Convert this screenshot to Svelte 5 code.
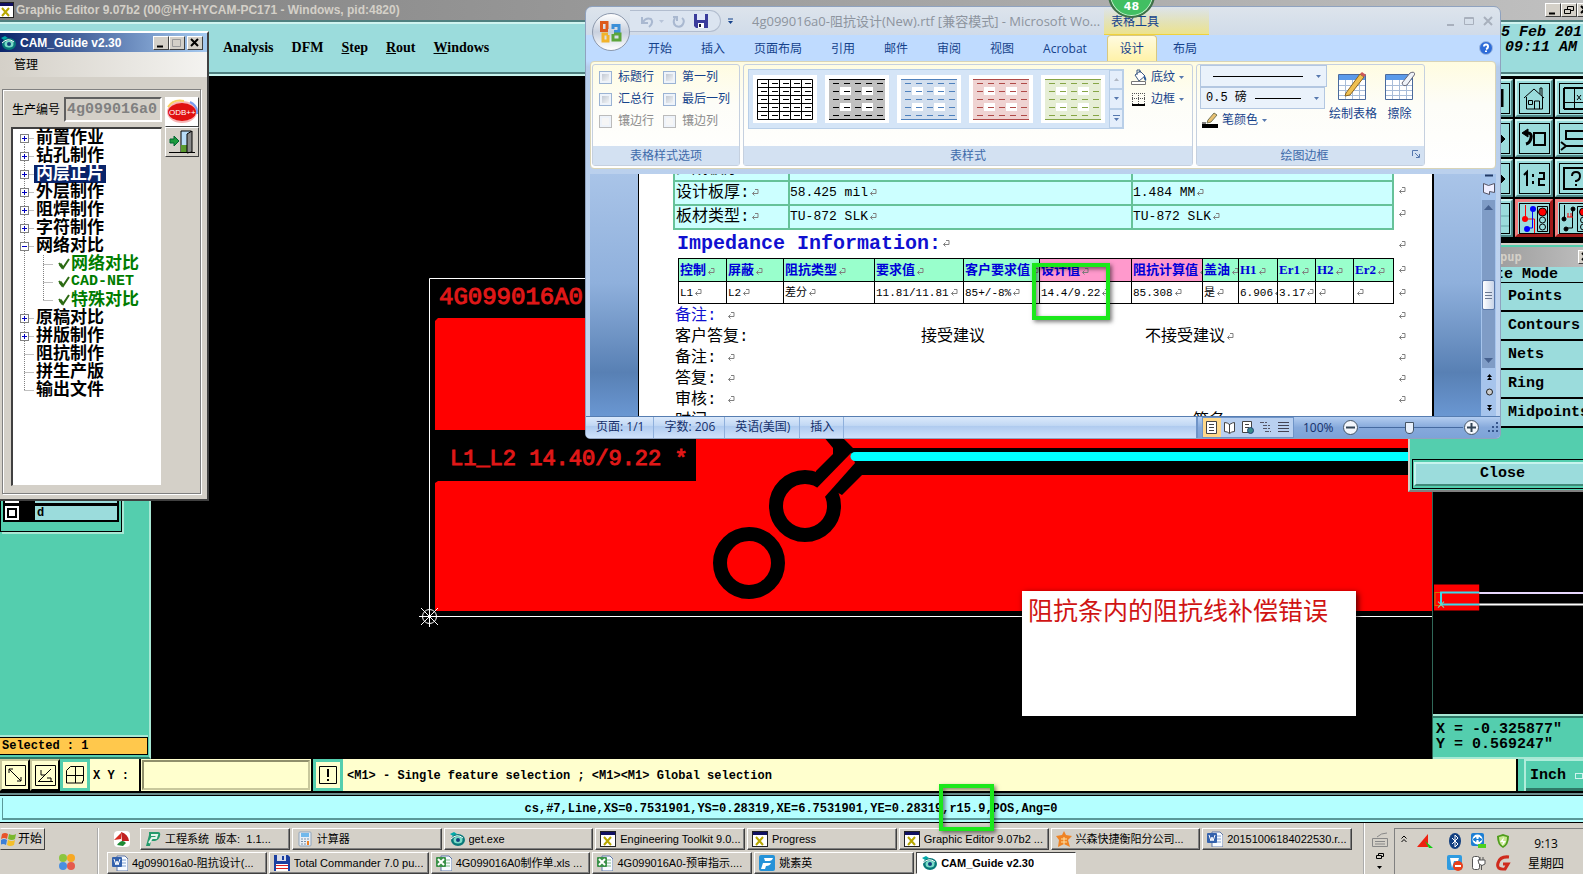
<script lang="ts">
	interface TreeNode {
		label: string;
		kind: 'closed' | 'open' | 'child' | 'leaf';
		last?: boolean;
		latin?: boolean;
	}

	const nodes: TreeNode[] = [
		{ label: '前置作业', kind: 'closed' },
		{ label: '钻孔制作', kind: 'closed' },
		{ label: '内层正片', kind: 'closed' },
		{ label: '外层制作', kind: 'closed' },
		{ label: '阻焊制作', kind: 'closed' },
		{ label: '字符制作', kind: 'closed' },
		{ label: '网络对比', kind: 'open' },
		{ label: '网络对比', kind: 'child' },
		{ label: 'CAD-NET', kind: 'child', latin: true },
		{ label: '特殊对比', kind: 'child', last: true },
		{ label: '原稿对比', kind: 'closed' },
		{ label: '拼版制作', kind: 'closed' },
		{ label: '阻抗制作', kind: 'leaf' },
		{ label: '拼生产版', kind: 'leaf' },
		{ label: '输出文件', kind: 'leaf', last: true }
	];
	let selected = $state(2);

	const tabs = ['开始', '插入', '页面布局', '引用', '邮件', '审阅', '视图', 'Acrobat'];

	const options = [
		{ label: '标题行', disabled: false },
		{ label: '第一列', disabled: false },
		{ label: '汇总行', disabled: false },
		{ label: '最后一列', disabled: false },
		{ label: '镶边行', disabled: true },
		{ label: '镶边列', disabled: true }
	];

	const tableStyles = [
		{ fill: '#ffffff', ink: '#000000', grid: true },
		{ fill: '#c0c0c0', ink: '#000000', grid: false },
		{ fill: '#d3dfee', ink: '#4f81bd', grid: false },
		{ fill: '#efd3d2', ink: '#b04a48', grid: false },
		{ fill: '#e6eed5', ink: '#86a546', grid: false }
	];

	const columns = [
		{ head: '控制', value: 'L1', width: 48 },
		{ head: '屏蔽', value: 'L2', width: 57 },
		{ head: '阻抗类型', value: '差分', width: 91 },
		{ head: '要求值', value: '11.81/11.81', width: 89 },
		{ head: '客户要求值', value: '85+/-8%', width: 76 },
		{ head: '设计值', value: '14.4/9.22', width: 92, pink: true },
		{ head: '阻抗计算值', value: '85.308', width: 71, pink: true },
		{ head: '盖油', value: '是', width: 36 },
		{ head: 'H1', value: '6.906', width: 39 },
		{ head: 'Er1', value: '3.17', width: 38 },
		{ head: 'H2', value: '', width: 38 },
		{ head: 'Er2', value: '', width: 40 }
	];

	const tools = [
		'bar', 'bar', 'home', 'window',
		'arrow', 'arrow', 'undo', 'snake',
		'arrow', 'arrow', 'ratio', 'help',
		'grid', 'grid', 'nets', 'pads'
	];

	const modes = ['Points', 'Contours', 'Nets', 'Ring', 'Midpoints'];

	const topTasks = [
		{ icon: 'p', label: '工程系统  版本:  1.1...' },
		{ icon: 'calc', label: '计算器' },
		{ icon: 'eye', label: 'get.exe' },
		{ icon: 'x', label: 'Engineering Toolkit 9.0...' },
		{ icon: 'x', label: 'Progress' },
		{ icon: 'x', label: 'Graphic Editor 9.07b2 ...' },
		{ icon: 'star', label: '兴森快捷衡阳分公司...' },
		{ icon: 'word', label: '20151006184022530.r...' }
	];
	const bottomTasks = [
		{ icon: 'word', label: '4g099016a0-阻抗设计(...' },
		{ icon: 'disk', label: 'Total Commander 7.0 pu...' },
		{ icon: 'excel', label: '4G099016A0制作单.xls ...' },
		{ icon: 'excel', label: '4G099016A0-预审指示....' },
		{ icon: 'f', label: '姚素英' },
		{ icon: 'eye', label: 'CAM_Guide v2.30', active: true }
	];

	let zoom = $state(49);
</script>

{#snippet mark()}
	<svg class="mark" width="8" height="9" viewBox="0 0 8 9" fill="none" stroke="#808080">
		<path d="M4 1.5h3v4H1.500M3.500 3.500l-2 2 2 2" />
	</svg>
{/snippet}

{#snippet caret()}
	<svg width="5" height="3" viewBox="0 0 5 3"><path d="M0 0h5L2.500 3z" fill="#5678ae" /></svg>
{/snippet}

{#snippet icon(name: string)}
	<svg class="icon" width="16" height="16" viewBox="0 0 16 16">
		{#if name === 'x'}
			<rect x=".5" y=".5" width="15" height="15" fill="#fff" stroke="#222" />
			<rect x="1" y="1" width="14" height="3" fill="#101060" />
			<path d="M4 6l7 8M11 6l-7 8" stroke="#b8a800" stroke-width="2" />
		{:else if name === 'p'}
			<path d="M4 1h9q3 0 2 4t-5 5H6l-1 5H1L4 4z" fill="#259a6c" />
			<path d="M6 4h6l-1 3H7l-3 5" fill="none" stroke="#e5f5ec" stroke-width="2" />
		{:else if name === 'calc'}
			<rect x="2" y="1" width="12" height="14" rx="1" fill="#e8eef5" stroke="#8fa4bb" />
			<rect x="4" y="2" width="8" height="4" fill="#70b8ec" />
			<path d="M4 8h8M4 10.500h8M4 13h8" stroke="#7890a8" stroke-dasharray="2 1" />
			<path d="M11 10v4" stroke="#f08020" stroke-width="2" />
		{:else if name === 'eye'}
			<path d="M1 3l4-2 3 2-4 2z" fill="#0aa" />
			<ellipse cx="9" cy="9" rx="7" ry="6" fill="#087878" />
			<ellipse cx="9" cy="9" rx="4.500" ry="3.500" fill="#7adcc8" />
			<circle cx="9" cy="9" r="2" fill="#14407c" />
			<path d="M2 8q6-6 12-1" fill="none" stroke="#fff" />
		{:else if name === 'star'}
			<path d="M8 0l2 4 6 1-4 4 2 7-6-3-6 3 1-7-3-4 6-1z" fill="#ef8324" />
			<path d="M5 8h6M5 11h6M8 6v7" stroke="#ffe0a0" />
		{:else if name === 'word' || name === 'excel'}
			<path d="M5 1h8l3 3v12H5z" fill="#f8fbff" stroke="#6078a8" />
			<path d="M9 5h5M9 8h5M9 11h5" stroke={name === 'word' ? '#7f9fd0' : '#7fb88a'} />
			<rect x="0" y="2" width="10" height="10" rx="1" fill={name === 'word' ? '#3462ad' : '#3a9148'} />
			{#if name === 'word'}
				<path d="M2 4l2 6 1-4 1 4 2-6" fill="none" stroke="#fff" />
			{:else}
				<path d="M2 4l6 6M8 4l-6 6" stroke="#fff" stroke-width="2" />
			{/if}
		{:else if name === 'disk'}
			<path d="M0 0h14l2 2v14H0z" fill="#1b3fa0" />
			<rect x="3" y="0" width="9" height="6" fill="#d8dce8" />
			<rect x="8" y="1" width="2" height="4" fill="#1b3fa0" />
			<rect x="2" y="9" width="12" height="7" fill="#fff" />
			<path d="M2 10.500h12M2 13.500h12" stroke="#e02020" />
		{:else if name === 'f'}
			<rect width="16" height="16" rx="2" fill="#2492d8" />
			<path d="M5 3h9q-1 3-4 3H6zM4 8h8q-1 3-5 3l-1 3H2z" fill="#fff" />
		{/if}
	</svg>
{/snippet}

<div class="screen">
	<header class="titlebar">
		{@render icon('x')}
		<span>Graphic Editor 9.07b2 (00@HY-HYCAM-PC171 - Windows, pid:4820)</span>
		<div class="title-buttons">
			<button class="sys" aria-label="Minimize"><svg width="10" height="10"><path d="M1 8.500h6" stroke="#000" stroke-width="2" /></svg></button>
			<button class="sys" aria-label="Restore"><svg width="10" height="10" fill="none" stroke="#000"><path d="M3.500 4V1.500h6v4H7M.5 4.500h6v4h-6z" /></svg></button>
			<button class="sys" aria-label="Close"><svg width="10" height="10"><path d="M1 1l7 7M8 1l-7 7" stroke="#000" stroke-width="2" /></svg></button>
		</div>
	</header>

	<nav class="menubar">
		<div class="menus">
			<button>Analysis</button>
			<button>DFM</button>
			<button><u>S</u>tep</button>
			<button><u>R</u>out</button>
			<button><u>W</u>indows</button>
		</div>
		<div class="date"><span>5 Feb 201</span><span class="time">09:11 AM</span></div>
	</nav>

	<main>
		<aside class="layers">
			<div class="layer-list">
				<div class="layer"><span class="box"></span><span class="name"></span></div>
				<div class="layer"><span class="box"></span><span class="name">d</span></div>
			</div>
			<div class="selected">Selected : 1</div>
		</aside>

		<svg class="canvas" viewBox="151 76 1282 683" preserveAspectRatio="xMinYMin slice">
			<path d="M438 318h900v112H435V321z" fill="#f00" />
			<path d="M696 430h760v181H435V483l3-2h258z" fill="#f00" />
			<path d="M816 471l17-17v-6l-10-12h18l12 12h603v27H862l-20 20-9-5-17-11z" />
			<circle cx="805" cy="506" r="29" fill="#f00" stroke="#000" stroke-width="14" />
			<path d="M812 493l39-40 4 10-32 36z" fill="#f00" />
			<path d="M855.500 456.500H1456" stroke="#0ff" stroke-width="9" />
			<circle cx="855" cy="456.500" r="4.500" fill="#0ff" />
			<circle cx="749" cy="563" r="29" fill="#f00" stroke="#000" stroke-width="14" />
			<path d="M1456 278.500H429.500v338H1456" fill="none" stroke="#fff" />
			<g fill="none" stroke="#fff">
				<circle cx="429.500" cy="616.500" r="7" />
				<path d="M419 616.500h21M429.500 606v21M421 608l17 17M438 608l-17 17" />
			</g>
			<text class="silk name-mark" x="439" y="304">4G099016A0</text>
			<text class="silk" x="450" y="465">L1_L2 14.40/9.22 *</text>
		</svg>

		<aside class="side">
			<div class="tools">
				{#each tools as tool, i (i)}
					<button class="tool" class:hot={tool === 'nets' || tool === 'pads'} aria-label={tool}>
						<svg width="29" height="29" viewBox="0 0 29 29" fill="none" stroke="#000">
							{#if tool === 'bar'}
								<path d="M22 5v18" stroke-width="3" />
							{:else if tool === 'arrow'}
								<path d="M12 15h8" stroke-width="4" /><path d="M20 10l5 5-5 5z" fill="#000" />
							{:else if tool === 'home'}
								<path d="M4 14L14 5l10 9M6.500 13v12h16V13M14.500 25v-8h5v8M8.500 16.500h4v4h-4zM20 10V4h2v8" />
							{:else if tool === 'window'}
								<path d="M4 4h25M4 4v21M4 25h25" stroke-width="2" /><path d="M14.500 4v21M4 18.500h25" /><path d="M17 11l4 5M21 11l-4 5" />
							{:else if tool === 'undo'}
								<path d="M5 9h3q4 0 3 5t-5 6" stroke-width="3" /><path d="M2 9l6-4v8z" fill="#000" /><path d="M14 9h11v12H14z" stroke-width="2" />
							{:else if tool === 'snake'}
								<path d="M29 7H6v8h22v7H6M1 18l5 4-5 4" stroke-width="2" />
							{:else if tool === 'ratio'}
								<path d="M4 11l3-3v14M19 9h5v6h-5v6h6" stroke-width="2" /><path d="M12 10h2v3h-2zM12 17h2v3h-2z" fill="#000" stroke="none" />
							{:else if tool === 'help'}
								<path d="M4 4h30v21H4z" stroke-width="2" /><path d="M12 12q0-4 4-4t4 4-4 5v1M16 20v2" stroke-width="2" />
							{:else if tool === 'grid'}
								<path d="M0 12h29M0 22h29" stroke="#6aa" />
							{:else if tool === 'nets'}
								<path d="M5.500 1v14h9v14" stroke="#f00" /><path d="M12.500 5v19h-6" stroke="#00f" />
								<circle cx="5" cy="15" r="3" fill="#f00" stroke="none" /><circle cx="13" cy="5" r="3" fill="#00f" stroke="none" /><circle cx="7" cy="25" r="3" fill="#00f" stroke="none" />
								<path d="M17.500 2.500h10v25h-10z" /><circle cx="22.500" cy="8" r="4" fill="#f00" /><circle cx="22.500" cy="16" r="3" /><circle cx="22.500" cy="23" r="3" />
							{:else}
								<path d="M4.500 1v14M12.500 5v19h-6" /><path d="M7 13h6M8 9v4M11 9v4" stroke="#f00" />
								<circle cx="4" cy="15" r="2" fill="#000" /><circle cx="13" cy="5" r="2" fill="#000" /><circle cx="6" cy="25" r="2" fill="#000" />
								<path d="M17.500 2.500h12v25h-12z" /><circle cx="23.500" cy="8" r="4" fill="#f00" /><circle cx="23.500" cy="16" r="3" /><circle cx="23.500" cy="23" r="3" />
							{/if}
						</svg>
					</button>
				{/each}
			</div>
			<svg class="mini" viewBox="1433 242 150 472" preserveAspectRatio="xMinYMax slice">
				<path d="M1434 585h45v26h-45z" fill="#f00" />
				<path d="M1583 593.500h-104" stroke="#e8d8ff" stroke-width="2" />
				<path d="M1479 605h104" stroke="#fff" stroke-width="2" />
				<path d="M1479 593h-38v12h38" fill="none" stroke="#3cdcec" stroke-width="2" />
				<path d="M1440 593h-5v13h5" fill="none" stroke="#d07000" />
				<path d="M1438 602l6 6M1444 602l-6 6" stroke="#7cd8b0" />
			</svg>
			<div class="coords">X = -0.325877"<br />Y = 0.569247"</div>
		</aside>
	</main>

	<div class="command">
		<button class="cmd" aria-label="Zoom area">
			<svg width="21" height="21" fill="none" stroke="#000"><path d="M.5.500h20v20H.5zM4 4l12 12M4 8V4h4M16 12v4h-4" /></svg>
		</button>
		<button class="cmd" aria-label="Angle">
			<svg width="21" height="21" fill="none" stroke="#000"><path d="M.5.500h20v20H.5zM3 16.500h15M4 16L16 4M6 5v5h4M12 13h4v3" /></svg>
		</button>
		<button class="cmd green" aria-label="Grid">
			<svg width="18" height="18" fill="none" stroke="#000"><path d="M.5 4.500l4-4h13v14.500h-1v2H.5zM9.500 1v16M1 9.500h16" /></svg>
		</button>
		<label for="xy">X Y :</label>
		<div class="xy"><input id="xy" type="text" /></div>
		<button class="cmd green" aria-label="Alert">
			<svg width="18" height="18" fill="none" stroke="#000"><path d="M.5.500h17v17H.5z" /><path d="M9 3v8M9 13v2" stroke-width="2" /></svg>
		</button>
		<div class="message">&lt;M1&gt; - Single feature selection ; &lt;M1&gt;&lt;M1&gt; Global selection</div>
		<button class="units">Inch <i></i></button>
	</div>

	<div class="info"><p>cs,#7,Line,XS=0.7531901,YS=0.28319,XE=6.7531901,YE=0.28319,r15.9,POS,Ang=0</p></div>

	<footer class="taskbar">
		<div class="launch">
			<button class="start">
				<svg width="16" height="16" viewBox="0 0 16 16"><path d="M1 3q3-2 6 0L6 8q-3-2-6 0z" fill="#e8532a" /><path d="M8 3q4 2 7 0l-1 5q-3 2-7 0z" fill="#7ab82e" /><path d="M0 9q3-2 6 0l-1 5q-3-2-6 0z" fill="#3c7fd8" /><path d="M7 9q4 2 7 0l-1 5q-4 2-7 0z" fill="#f5bf2a" /></svg>
				开始
			</button>
			<svg class="quad" width="16" height="16" viewBox="0 0 16 16"><circle cx="4" cy="4" r="4" fill="#8bc53f" /><circle cx="12" cy="4" r="4" fill="#f7a823" /><circle cx="4" cy="12" r="4" fill="#4a8fe0" /><circle cx="12" cy="12" r="4" fill="#e55a4e" /></svg>
		</div>
		<div class="tasks">
			<div class="task-row">
				<svg class="quick" width="16" height="16" viewBox="0 0 16 16"><rect width="16" height="16" rx="4" fill="#fff" /><path d="M7 2L0 9l7-1z" fill="#d8281e" /><path d="M7 1q7 2 8 9H8z" fill="#c02020" /><path d="M3 14q5-7 9-2l-3 3z" fill="#1d8a34" /></svg>
				{#each topTasks as task (task.label)}
					<button class="task">{@render icon(task.icon)}<span>{task.label}</span></button>
				{/each}
			</div>
			<div class="task-row lower">
				{#each bottomTasks as task (task.label)}
					<button class="task" class:active={task.active}>{@render icon(task.icon)}<span>{task.label}</span></button>
				{/each}
			</div>
		</div>
		<div class="ime">
			<svg width="16" height="15" fill="none" stroke="#888"><path d="M.5 6.500h15v8H.5zM3 9.500h10M3 12h10M5 5q4-4 10-4" stroke-width="1" /></svg>
			<svg width="8" height="7" fill="none" stroke="#000"><path d="M2.500 2V.5h5v3H6M.5 2.500h5v3h-5z" /></svg>
			<svg width="6" height="3"><path d="M0 0h5L2.500 3z" /></svg>
		</div>
		<div class="tray">
			<svg class="chev" width="6" height="8" fill="none" stroke="#000"><path d="M.5 3.500L3 1l2.500 2.500M.5 7L3 4.500 5.500 7" /></svg>
			<div class="tray-icons">
				<svg width="16" height="16"><path d="M0 14L11 1v13z" fill="#e21" /><path d="M8 8l8 7h-4z" fill="#1c1" /></svg>
				<svg width="16" height="16"><ellipse cx="8" cy="8" rx="6" ry="8" fill="#123f80" /><path d="M5 5l6 6-3 3V2l3 3-6 6" fill="none" stroke="#fff" /></svg>
				<svg width="16" height="16"><rect width="13" height="13" rx="2" fill="#1d7fd4" /><circle cx="6.500" cy="6.500" r="5" fill="#fff" /><path d="M2 6.500l3-2v4zM11 6.500l-3-2v4zM4 6.500h5" fill="#1d7fd4" stroke="#1d7fd4" /><rect x="7" y="11" width="8" height="4" fill="#4cd020" /></svg>
				<svg width="16" height="16"><path d="M8 1l6 2q0 9-6 12Q2 12 2 3z" fill="#4f9d1c" /><path d="M8 3l4 1q0 7-4 9-4-2-4-9z" fill="#c8e890" /><path d="M9 4L5 9h3l-1 4 4-5H8z" fill="#fff" /></svg>
				<span></span>
				<svg width="16" height="16"><rect width="15" height="15" rx="2" fill="#2f9be0" /><path d="M3 3h9l-1 3H7l-2 7" fill="#fff" /><circle cx="11" cy="11" r="5" fill="#e8401c" /><path d="M8 11h6" stroke="#fff" stroke-width="2" /></svg>
				<svg width="16" height="16" fill="#fff" stroke="#555"><rect x="1.500" y="1.500" width="7" height="13" rx="2" /><path d="M7 5h7v4q-3 3-6 0zM9 5V2M12 5V2M10.500 10v5" /></svg>
				<svg width="16" height="16"><path d="M14 2Q5 1 3 8t7 6l3-5H8" fill="none" stroke="#cf2a1c" stroke-width="3" /></svg>
			</div>
			<div class="clock">9:13<br />星期四</div>
		</div>
	</footer>

	<section class="guide">
		<header>
			{@render icon('eye')}
			<span>CAM_Guide v2.30</span>
			<button class="sys" aria-label="Minimize"><svg width="10" height="10"><path d="M1 8.500h6" stroke="#000" stroke-width="2" /></svg></button>
			<button class="sys" aria-label="Maximize"><svg width="10" height="10" fill="none" stroke="#999"><path d="M.5 1.500h8v7h-8z" /></svg></button>
			<button class="sys gap" aria-label="Close"><svg width="10" height="10"><path d="M1 1l7 7M8 1l-7 7" stroke="#000" stroke-width="2" /></svg></button>
		</header>
		<div class="guide-menu"><button>管理</button></div>
		<div class="guide-body">
			<div class="guide-left">
				<div class="job">
					<label for="job">生产编号</label>
					<input id="job" value="4g099016a0" disabled />
				</div>
				<ul class="tree">
					{#each nodes as node, i (i)}
						<li>
							{#if node.kind === 'child'}
								<svg width="45" height="18" fill="none" stroke="#808080" stroke-dasharray="1 1">
									<path d="M11.500 0v18M30.500 0v{node.last ? 9 : 18}M30.500 9.500h9" />
								</svg>
								<svg width="13" height="18"><path d="M1 8l4 5 6-9" fill="none" stroke="#2d6b14" stroke-width="2" /><path d="M2 9l3 4" stroke="#2d6b14" stroke-width="3" /></svg>
							{:else}
								<svg width="21" height="18" fill="none" stroke="#808080">
									<path d="M11.500 {i === 0 ? 9 : 0}v{node.last || i === 0 ? 9 : 18}M11.500 9.500h9" stroke-dasharray="1 1" />
									{#if node.kind !== 'leaf'}
										<rect x="7.500" y="5.500" width="8" height="8" fill="#fff" />
										<path d={node.kind === 'open' ? 'M9 9.500h5' : 'M9 9.500h5M11.500 7v5'} stroke="#0000c0" />
									{/if}
								</svg>
							{/if}
							<button
								class="node"
								class:child={node.kind === 'child'}
								class:latin={node.latin}
								class:selected-node={selected === i}
								onclick={() => (selected = i)}
							>
								{node.label}
							</button>
						</li>
					{/each}
				</ul>
			</div>
			<div class="guide-buttons">
				<button class="odb" aria-label="ODB++">
					<svg width="32" height="26" viewBox="0 0 32 26"><ellipse cx="16" cy="13" rx="15" ry="11" fill="#f7b5b5" /><path d="M2 8q5-8 16-6" fill="none" stroke="#f8d060" stroke-width="2" /><path d="M24 3q8 4 7 12" fill="none" stroke="#7a9cf0" stroke-width="2" /><ellipse cx="16" cy="13" rx="14" ry="9" fill="#e01010" /><text x="3" y="16">ODB++</text></svg>
				</button>
				<button class="exit" aria-label="退出">
					<svg width="26" height="24" viewBox="0 0 26 24"><path d="M12 1h10v21H12z" fill="#b8dcf8" stroke="#000" /><path d="M12 15h10v7H12z" fill="#5a9a30" /><path d="M18 4l5-3v21l-5 1z" fill="#8a8a8a" stroke="#000" /><path d="M1 9h4V6l5 5-5 5v-3H1z" fill="#1c9a3c" stroke="#063" /><path d="M0 22.500h26" stroke="#000" /></svg>
				</button>
			</div>
		</div>
	</section>

	<section class="popup">
		<header><span>pup</span><button class="sys" aria-label="Close"><svg width="10" height="10"><path d="M1 1l7 7M8 1l-7 7" stroke="#000" stroke-width="2" /></svg></button></header>
		<h3>te Mode</h3>
		{#each modes as mode (mode)}
			<button class="mode">{mode}</button>
		{/each}
		<div class="close-wrap"><button class="close">Close</button></div>
	</section>

	<section class="word">
		<div class="word-title">
			<div class="qat">
				<svg width="15" height="13" fill="none" stroke="#a9b8d0" stroke-width="2"><path d="M2 2v6h6M3 7q3-5 8-3 3 4-2 8" /></svg>
				<svg width="5" height="3"><path d="M0 0h5L2.500 3z" fill="#b8c4d8" /></svg>
				<svg class="redo" width="14" height="13" fill="none" stroke="#a9b8d0" stroke-width="2"><path d="M3 3q-3 5 1 8 5 2 7-2t-1-6M1 2h4v4" /></svg>
				<svg class="save" width="14" height="14"><path d="M0 0h14v14H2l-2-2z" fill="#3a3c9c" /><path d="M3 0h8v6H3z" fill="#dfe6f8" /><path d="M4 9h6v5H4z" fill="#fff" /><path d="M5 10h2v3H5z" fill="#223" /></svg>
			</div>
			<svg class="more" width="6" height="6"><path d="M0 1h5" stroke="#15428b" /><path d="M0 3h5L2.500 6z" fill="#15428b" /></svg>
			<h1>4g099016a0-阻抗设计(New).rtf [兼容模式] - Microsoft Wo...</h1>
			<span class="context">表格工具</span>
			<div class="word-sys">
				<svg width="8" height="10" stroke="#a8b0bd" stroke-width="2"><path d="M0 9h7" /></svg>
				<svg width="10" height="10" fill="none" stroke="#a8b0bd"><path d="M.5 1.500h9v7h-9zM0 2.500h10" /></svg>
				<svg width="10" height="10" stroke="#a8b0bd" stroke-width="2"><path d="M1 1l8 8M9 1L1 9" /></svg>
			</div>
		</div>
		<div class="tabs">
			{#each tabs as tab (tab)}
				<button>{tab}</button>
			{/each}
			<button class="current">设计</button>
			<button class="layout">布局</button>
			<svg class="ask" width="14" height="14"><circle cx="7" cy="7" r="6.500" fill="#2e6cd8" stroke="#9db8e0" /><path d="M5 5.500q0-2 2-2t2 2-2 2.500M7 9.500v1.500" fill="none" stroke="#fff" stroke-width="2" /></svg>
		</div>

		<div class="ribbon">
			<div class="group g-options">
				<div class="checks">
					{#each options as option (option.label)}
						<label class:off={option.disabled}><input type="checkbox" disabled={option.disabled} />{option.label}</label>
					{/each}
				</div>
				<h2>表格样式选项</h2>
			</div>
			<div class="group g-styles">
				<div class="group-main">
					<div class="gallery">
						{#each tableStyles as style, s (s)}
							<button class="thumb" aria-label="表样式 {s + 1}">
								<svg width="56" height="41" viewBox="0 0 56 41" stroke={style.ink}>
									<rect width="56" height="41" fill={style.fill} stroke="none" />
									{#if style.grid}
										<path d="M.5.500h55v40H.5zM11.500 0v41M22.500 0v41M33.500 0v41M44.500 0v41M0 8.500h56M0 16.500h56M0 24.500h56M0 32.500h56" fill="none" />
									{:else}
										<path d="M11 8h11v8H11zM33 8h11v8H33zM11 24h11v8H11zM33 24h11v8H33z" fill="#fff" stroke="none" />
										<path d="M0 .5h56M0 40.500h56" />
									{/if}
									{#each [4.5, 12.5, 20.5, 28.5, 36.5] as y (y)}
										<path d="M4 {y}h52" stroke-dasharray="6 5" />
									{/each}
								</svg>
							</button>
						{/each}
						<div class="scroller">
							<button aria-label="上一行"><svg width="5" height="3"><path d="M0 3h5L2.500 0z" fill="#b0b8c4" /></svg></button>
							<button aria-label="下一行">{@render caret()}</button>
							<button aria-label="其他"><svg width="7" height="7"><path d="M0 .5h7" stroke="#5678ae" /><path d="M1 3h5L3.500 6z" fill="#5678ae" /></svg></button>
						</div>
					</div>
					<div class="fills">
						<button>
							<svg width="16" height="16"><path d="M4 6l5-4 5 5-6 5z" fill="#fff" stroke="#3d5a85" /><path d="M6 6V1h3v3" fill="none" stroke="#3d5a85" /><path d="M13 6q3 3 2 6-3-1-2-6" fill="#2f5d9c" /><path d="M.5 12.500h14v3H.5z" fill="#fff" stroke="#777" /></svg>
							底纹 {@render caret()}
						</button>
						<button>
							<svg width="16" height="14"><path d="M1.500 1v11M7.500 1v11M13.500 1v11M1 1.500h13M1 6.500h13" stroke="#555" stroke-dasharray="1 1" /><path d="M1 13h13" stroke="#000" stroke-width="2" /></svg>
							边框 {@render caret()}
						</button>
					</div>
				</div>
				<h2>表样式</h2>
			</div>
			<div class="group g-draw">
				<div class="group-main">
					<div class="pens">
						<button class="combo first" aria-label="笔样式"><i></i>{@render caret()}</button>
						<button class="combo" aria-label="笔划粗细">0.5 磅<i></i>{@render caret()}</button>
						<button class="pen">
							<svg width="16" height="16"><path d="M6 8l6-7 3 2-6 7-4 1z" fill="#e8c070" stroke="#775" /><path d="M0 11h4" stroke="#000" /><path d="M0 14h16" stroke="#000" stroke-width="4" /></svg>
							笔颜色 {@render caret()}
						</button>
					</div>
					<button class="big">
						<svg width="30" height="30"><path d="M.5 3.500h27v25H.5z" fill="#fff" stroke="#4a6a9c" /><path d="M1 4h26v5H1z" fill="#5b9bea" /><path d="M1 14.500h26M1 19.500h26M1 24.500h26M7.500 9v19M14.500 9v19M21.500 9v19" stroke="#a8bcd8" /><path d="M8 22L22 3l4 3-14 18-5 1z" fill="#f0c050" stroke="#8a6420" /><path d="M22 3l2-2 4 3-2 2z" fill="#d05858" /></svg>
						绘制表格
					</button>
					<button class="big">
						<svg width="30" height="30"><path d="M.5 3.500h27v25H.5z" fill="#fff" stroke="#4a6a9c" /><path d="M1 4h26v5H1z" fill="#5b9bea" /><path d="M1 14.500h26M1 19.500h26M1 24.500h26M7.500 9v19M14.500 9v19M21.500 9v19" stroke="#a8bcd8" /><path d="M17 12l8-10q4-2 5 1l-8 11q-4 2-5-2z" fill="#eef2f8" stroke="#667" /></svg>
						擦除
					</button>
				</div>
				<h2>绘图边框 <svg width="8" height="8" fill="none" stroke="#5678ae"><path d="M.5 6V.5H6M3 3l4 4M7.500 4v3.500H4" /></svg></h2>
			</div>
		</div>

		<div class="workspace">
			<article class="page">
				<div class="line"><table class="board">
					<tbody>
						<tr class="cut"><td>完成板厚:</td><td>,&nbsp; &nbsp;,&nbsp; &nbsp; ,</td><td>,&nbsp; &nbsp; ,</td></tr>
						<tr><td>设计板厚:{@render mark()}</td><td>58.425 mil{@render mark()}</td><td>1.484 MM{@render mark()}</td></tr>
						<tr><td>板材类型:{@render mark()}</td><td>TU-872 SLK{@render mark()}</td><td>TU-872 SLK{@render mark()}</td></tr>
					</tbody>
				</table><div class="ends">{@render mark()}{@render mark()}</div></div>
				<div class="line"><h2>Impedance Information:{@render mark()}</h2>{@render mark()}</div>
				<div class="line"><table class="impedance">
					<colgroup>
						{#each columns as column (column.head)}
							<col style="width: {column.width}px" />
						{/each}
					</colgroup>
					<thead>
						<tr>{#each columns as column (column.head)}<th class:pink={column.pink}>{column.head}{@render mark()}</th>{/each}</tr>
					</thead>
					<tbody>
						<tr>{#each columns as column (column.head)}<td>{column.value}{@render mark()}</td>{/each}</tr>
					</tbody>
				</table><div class="ends">{@render mark()}{@render mark()}</div></div>
				<div class="reply">
					<p class="note-line"><span>备注: {@render mark()}</span>{@render mark()}</p>
					<p><span>客户答复:</span><span>接受建议</span><span>不接受建议{@render mark()}</span>{@render mark()}</p>
					<p><span>备注: {@render mark()}</span>{@render mark()}</p>
					<p><span>答复: {@render mark()}</span>{@render mark()}</p>
					<p><span>审核: {@render mark()}</span>{@render mark()}</p>
					<p class="sign"><span>时间</span><span></span><span>签名</span></p>
				</div>
			</article>
			<div class="vscroll">
				<svg width="14" height="26"><path d="M3 1.500h8" stroke="#223a66" stroke-width="2" /><path d="M1.500 9.500l5 2 6-2v9l-5-1v3l-6-2z" fill="#eef" stroke="#556" /></svg>
				<div class="track">
					<svg width="9" height="5"><path d="M0 5h9L4.500 0z" fill="#46618f" /></svg>
					<div class="thumb-v"><i></i><i></i><i></i></div>
					<svg width="9" height="5"><path d="M0 0h9L4.500 5z" fill="#46618f" /></svg>
				</div>
				<svg width="14" height="48"><path d="M5 9h5L7.500 6zM5 12h5L7.500 9zM5 40h5l-2.500 3zM5 37h5l-2.500 3z" /><circle cx="7.500" cy="24" r="3" fill="#ccc" stroke="#222" /></svg>
			</div>
		</div>

		<div class="word-status">
			<span>页面: 1/1</span><span>字数: 206</span><span>英语(美国)</span><span>插入</span>
			<div class="views">
				<div class="view-set">
					<button class="on" aria-label="页面视图"><svg width="12" height="13" fill="#fff" stroke="#444"><path d="M.5.500h10v12H.5zM3 3.500h5M3 6.500h5M3 9.500h5" /></svg></button>
					<button aria-label="阅读版式"><svg width="12" height="13" fill="#fff" stroke="#444"><path d="M.5 1.500q3 0 5 2 3-2 5-2v9q-3 0-5 2-2-2-5-2zM5.500 3v9" /></svg></button>
					<button aria-label="Web 版式"><svg width="12" height="13" fill="#fff" stroke="#444"><path d="M.5.500h9v11h-9zM3 3.500h4M3 6.500h4" /><circle cx="8.500" cy="9.500" r="3" fill="#3a8a8a" stroke="#247" /></svg></button>
					<button aria-label="大纲"><svg width="12" height="13" stroke="#556"><path d="M0 1.500h7M3 4.500h7M3 7.500h7M5 10.500h6" stroke-dasharray="4 1" /></svg></button>
					<button aria-label="草稿"><svg width="12" height="13" stroke="#445"><path d="M0 1.500h11M0 4.500h11M0 7.500h11M0 10.500h11" /></svg></button>
				</div>
				<label for="zoom">100%</label>
				<button class="round" aria-label="缩小"><svg width="9" height="9" stroke="#345"><path d="M0 4.500h9" stroke-width="2" /></svg></button>
				<input id="zoom" type="range" bind:value={zoom} />
				<button class="round" aria-label="放大"><svg width="9" height="9" stroke="#345"><path d="M0 4.500h9M4.500 0v9" stroke-width="2" /></svg></button>
				<svg width="12" height="12" fill="#36558c"><path d="M8 0h2v2H8zM4 4h2v2H4zM8 4h2v2H8zM0 8h2v2H0zM4 8h2v2H4zM8 8h2v2H8z" /></svg>
			</div>
		</div>

		<button class="office" aria-label="Office">
			<svg width="26" height="26" viewBox="0 0 26 26" fill="none" stroke-width="3"><path d="M9 10V3.500H3.500v8H10" stroke="#dd5a1c" /><path d="M15 10V6.500h6v6h-5" stroke="#3c8fd8" /><path d="M10 15H5v7h5v-6" stroke="#f2b32a" /><path d="M15 15v6h7v-6h-6" stroke="#5ca53a" /></svg>
		</button>
	</section>

	<div class="badge">48</div>
	<div class="comment">阻抗条内的阻抗线补偿错误</div>
	<div class="highlight value"></div>
	<div class="highlight radius"></div>
</div>

<style>
	:global(body) {
		margin: 0;
		background: #000;
	}

	.screen {
		position: relative;
		display: flex;
		flex-direction: column;
		min-height: 100vh;
		overflow: hidden;
		font: 12px/16px 'Open Sans', 'Noto Sans CJK SC', sans-serif;
		color: #000;
	}

	.screen :is(button, input, h1, h2, h3, p, ul) {
		margin: 0;
		padding: 0;
		font: inherit;
		color: inherit;
	}

	.screen button {
		border: 0;
		background: none;
		white-space: nowrap;
	}

	svg {
		flex-shrink: 0;
	}

	.titlebar {
		display: flex;
		align-items: center;
		gap: 2px;
		height: 20px;
		background: linear-gradient(90deg, #808080, #c0c0c0);
		color: #d4d0c8;
		font: bold 12px/16px 'Liberation Sans', sans-serif;
		overflow: hidden;
	}

	.titlebar .icon {
		margin-left: -2px;
	}

	.title-buttons {
		display: flex;
		margin: 0 -10px 0 auto;
	}

	.screen .sys {
		display: flex;
		align-items: center;
		justify-content: center;
		width: 16px;
		height: 14px;
		flex-shrink: 0;
		background: #d4d0c8;
		border: 1px solid;
		border-color: #fff #404040 #404040 #fff;
	}

	.screen .sys.gap {
		margin-left: 2px;
	}

	.menubar {
		box-sizing: border-box;
		display: flex;
		justify-content: space-between;
		height: 56px;
		border-top: 2px solid #4f8080;
		border-bottom: 2px solid #c8f4ee;
		background: #9bdcdc;
		box-shadow: inset 0 2px #d0f4f0, inset 0 -2px #4f8080;
	}

	.menus {
		display: flex;
		gap: 18px;
		align-items: center;
		padding-left: 223px;
	}

	.screen .menus button {
		font: bold 14px/16px 'Liberation Serif', serif;
	}

	.date {
		width: 82px;
		padding-top: 3px;
		font: italic bold 15px/15px 'Liberation Mono', monospace;
		white-space: nowrap;
	}

	.date span {
		display: block;
	}

	.date .time {
		padding-left: 4px;
	}

	main {
		flex: 1;
		display: flex;
		min-height: 680px;
		background: #000;
	}

	.layers {
		box-sizing: border-box;
		display: flex;
		flex-direction: column;
		justify-content: space-between;
		width: 151px;
		padding: 409px 0 2px;
		background: #54ceae;
		border-right: 2px solid #a8e8d4;
		border-bottom: 2px solid #2f7a68;
		font: bold 12px/16px 'Liberation Mono', monospace;
	}

	.layer-list {
		width: 116px;
		padding: 2px 2px 9px;
		border: 1px solid #000;
		box-shadow: 2px 2px #a8e8d4;
	}

	.layer {
		display: flex;
		align-items: center;
		height: 14px;
		border: 2px solid #000;
		border-top-width: 1px;
		background: #000;
		gap: 18px;
	}

	.box {
		width: 6px;
		height: 6px;
		border: 2px solid #000;
		box-shadow: 0 0 0 2px #fff;
		margin-left: 2px;
		background: #fff;
	}

	.name {
		flex: 1;
		height: 14px;
		padding-left: 2px;
		line-height: 14px;
		background: #9bdcdc;
	}

	.selected {
		padding-left: 2px;
		margin-right: 1px;
		border: 1px solid #000;
		border-left: 0;
		background: #ffc84c;
		box-shadow: 0 -2px #a8e8d4;
	}

	.canvas {
		flex: 1;
		width: 0;
		height: 683px;
		background: #000;
	}

	.silk {
		font: 22px 'Liberation Mono', monospace;
		fill: #e01818;
		stroke: #e01818;
	}

	.name-mark {
		font-size: 24px;
	}

	.side {
		display: flex;
		flex-direction: column;
		width: 150px;
		overflow: hidden;
		box-shadow: -1px 0 #2f6858;
	}

	.tools {
		display: grid;
		grid-template-columns: repeat(4, 40px);
		padding: 2px 0 2px 1px;
		background: #000;
	}

	.screen .tool {
		display: flex;
		margin: 1px;
		padding: 1px;
		width: 38px;
		height: 38px;
		align-items: center;
		justify-content: center;
		background: #9bdcdc;
		border: 2px solid;
		border-color: #d0f4f0 #4f8888 #4f8888 #d0f4f0;
	}

	.tool svg {
		outline: 1px solid #000;
	}

	.screen .tool.hot {
		border: 3px solid #b02020;
		border-color: #f08080 #a01818 #a01818 #f08080;
	}

	.mini {
		flex: 1;
		height: 0;
		width: 150px;
	}

	.coords {
		padding: 6px 3px;
		height: 29px;
		border-top: 2px solid #a8e8d4;
		border-bottom: 2px solid #a8e8d4;
		background: #54ceae;
		box-shadow: inset 0 2px #2f7a68;
		font: bold 15px/15px 'Liberation Mono', monospace;
		white-space: nowrap;
	}

	.command {
		display: flex;
		height: 32px;
		border-bottom: 2px solid #000;
		background: #ffffce;
		font: bold 12px/34px 'Liberation Mono', monospace;
	}

	.screen .cmd {
		display: flex;
		align-items: center;
		justify-content: center;
		box-sizing: border-box;
		width: 30px;
		background: #ffffce;
		border: 2px solid #c8c89c;
		border-right: 2px solid #000;
		border-bottom: 2px solid #000;
	}

	.screen .cmd.green {
		border: 3px solid #54ceae;
	}

	.command label {
		padding: 0 10px 0 3px;
	}

	.xy {
		display: flex;
		box-sizing: border-box;
		width: 174px;
		padding: 1px;
		border: 1px solid #000;
		border-width: 0 2px;
	}

	.screen .xy input {
		box-sizing: border-box;
		width: 100%;
		border: 2px solid;
		border-color: #90906c #c8c89c #c8c89c #90906c;
		background: #ffffce;
	}

	.message {
		flex: 1;
		padding-left: 4px;
		white-space: nowrap;
	}

	.screen .units {
		display: flex;
		align-items: center;
		gap: 9px;
		width: 67px;
		padding: 2px 0 0 12px;
		border-left: 2px solid #000;
		background: #54ceae;
		box-shadow: inset 6px 0 #54ceae, inset 8px 2px #b0ecda, inset 0 -3px #2f7a68;
		font: bold 15px/30px 'Liberation Mono', monospace;
		overflow: hidden;
	}

	.units i {
		width: 14px;
		height: 4px;
		border: 1px solid #d0f4f0;
	}

	.info {
		padding: 3px 0 3px 2px;
		border-top: 2px solid #6a8c8c;
		background: #b4ffff;
		box-shadow: inset 0 1px #000, inset 0 -1px #000;
	}

	.screen .info p {
		height: 20px;
		border-bottom: 2px solid #5a9898;
		border-left: 1px solid #5a9898;
		padding-right: 4px;
		font: bold 12px/22px 'Liberation Mono', monospace;
		text-align: center;
	}

	.taskbar {
		display: flex;
		height: 51px;
		background: #d4d0c8;
		font: 12px/18px 'Open Sans', 'Noto Sans CJK SC', sans-serif;
	}

	.launch {
		box-sizing: border-box;
		width: 99px;
		margin: 5px 0 0;
		border-right: 2px groove #fff;
	}

	.screen .start {
		display: flex;
		align-items: center;
		gap: 1px;
		box-sizing: border-box;
		width: 45px;
		height: 22px;
		border: 1px solid;
		border-color: #fff #404040 #404040 #d4d0c8;
	}

	.quad {
		display: block;
		margin: 4px 0 0 59px;
	}

	.tasks {
		flex: 1;
		min-width: 0;
		padding: 5px 11px 0 8px;
	}

	.task-row {
		display: flex;
		gap: 2px;
		height: 24px;
	}

	.task-row.lower {
		padding-right: 276px;
	}

	.quick {
		margin: 3px 8px 0 7px;
	}

	.screen .task {
		flex: 1 1 0;
		min-width: 0;
		display: flex;
		align-items: center;
		gap: 4px;
		height: 22px;
		padding: 0 1px 0 4px;
		border: 1px solid;
		border-color: #fff #404040 #404040 #fff;
		box-shadow: inset -1px -1px #808080;
		font: 11px/18px 'Liberation Sans', 'Noto Sans CJK SC', sans-serif;
		white-space: pre;
	}

	.task span {
		overflow: hidden;
	}

	.screen .task.active {
		background: #fff;
		border-color: #404040 #fff #fff #404040;
		box-shadow: none;
		font-weight: bold;
	}

	.ime {
		display: flex;
		flex-direction: column;
		align-items: center;
		gap: 6px;
		width: 29px;
		padding-top: 9px;
		border-left: 2px groove #fff;
	}

	.tray {
		display: flex;
		width: 188px;
		margin-top: 5px;
		border-top: 1px solid #808080;
		border-left: 1px solid #808080;
	}

	.chev {
		margin: 6px 0 0 6px;
	}

	.tray-icons {
		display: grid;
		grid-template-columns: 30px 24px 24px 16px;
		grid-auto-rows: 22px;
		margin: 4px 0 0 10px;
	}

	.clock {
		margin: 5px 0 0 13px;
		line-height: 20px;
		width: 44px;
		text-align: center;
	}

	/* CAM guide window */
	.guide {
		position: absolute;
		left: 0;
		top: 31px;
		box-sizing: border-box;
		display: flex;
		flex-direction: column;
		width: 209px;
		height: 470px;
		border: 2px solid;
		border-left: 0;
		border-color: #fff #404040 #404040;
		background: #d4d0c8;
	}

	.guide header {
		display: flex;
		align-items: center;
		height: 19px;
		padding-right: 4px;
		background: linear-gradient(90deg, #0a246a, #a6caf0);
		color: #fff;
		font: bold 12px/16px 'Liberation Sans', sans-serif;
	}

	.guide header span {
		flex: 1;
		padding-left: 4px;
	}

	.guide-menu {
		padding: 5px 14px 3px;
		height: 17px;
		background: linear-gradient(90deg, #d4d0c8, #f4f3f0);
	}

	.guide-body {
		flex: 1;
		display: flex;
		gap: 3px;
		min-width: 0;
		margin: 12px 6px 5px 2px;
		padding: 7px 1px 7px 8px;
		border: 1px solid #808080;
		box-shadow: 1px 1px #fff, inset 1px 1px #fff;
	}

	.guide-left {
		flex: 1;
		min-width: 0;
		display: flex;
		flex-direction: column;
	}

	.job {
		display: flex;
		align-items: center;
		gap: 4px;
		height: 25px;
		padding-left: 1px;
		white-space: nowrap;
	}

	.screen .job input {
		box-sizing: border-box;
		flex: 1;
		width: 0;
		min-width: 0;
		height: 25px;
		padding-left: 1px;
		border: 2px solid;
		border-color: #606060 #fff #fff #606060;
		background: #d4d0c8;
		color: #808080;
		font: bold 15px/20px 'Liberation Mono', monospace;
	}

	.screen .tree {
		flex: 1;
		margin-top: 5px;
		border: 1px solid;
		border-width: 2px 1px 1px 2px;
		border-color: #404040 #d4d0c8 #d4d0c8 #404040;
		background: #fff;
		list-style: none;
	}

	.tree li {
		display: flex;
		height: 18px;
	}

	.screen .node {
		padding: 0 2px;
		font: bold 17px/18px 'Liberation Serif', 'Noto Sans CJK SC', sans-serif;
	}

	.screen .node.child {
		padding: 0;
		color: #007c00;
	}

	.screen .node.latin {
		font: bold 15px/18px 'Liberation Mono', monospace;
	}

	.screen .selected-node {
		background: #0a246a;
		color: #fff;
	}

	.guide-buttons {
		width: 34px;
		flex-shrink: 0;
	}

	.screen .guide-buttons button {
		display: flex;
		align-items: center;
		justify-content: center;
		box-sizing: border-box;
		width: 34px;
		height: 30px;
		border: 1px solid;
		border-color: #fff #404040 #404040 #fff;
	}

	.screen .guide-buttons .odb {
		background: #fff;
	}

	.odb text {
		font: 8px 'Liberation Sans', sans-serif;
		fill: #fff;
	}

	/* Filter popup */
	.popup {
		position: absolute;
		right: 0;
		top: 243px;
		box-sizing: border-box;
		width: 175px;
		height: 249px;
		padding: 2px 0 0 1px;
		border: 2px solid #d4d0c8;
		border-right: 0;
		border-bottom-color: #808080;
		background: #54ceae;
		font: bold 15px/26px 'Liberation Mono', monospace;
		overflow: hidden;
	}

	.popup header {
		display: flex;
		align-items: center;
		justify-content: space-between;
		height: 20px;
		margin-right: -11px;
		padding-left: 89px;
		background: linear-gradient(90deg, #808080, #c0c0c0);
		color: #d4d0c8;
		font: bold 12px/16px 'DejaVu Sans Mono', monospace;
	}

	.screen .popup h3 {
		padding-left: 84px;
		border-bottom: 1px solid #000;
		background: #9bdcdc;
		font: bold 15px/15px 'Liberation Mono', monospace;
	}

	.screen .mode {
		display: block;
		width: 100%;
		height: 29px;
		padding-left: 97px;
		border-bottom: 2px solid #000;
		background: #9bdcdc;
		text-align: left;
	}

	.close-wrap {
		margin: 31px -10px 0 1px;
		border: 1px solid #000;
		padding: 1px;
	}

	.screen .close {
		box-sizing: border-box;
		width: 100%;
		height: 24px;
		border: 2px solid;
		border-color: #c8f4ee #3f8878 #3f8878 #c8f4ee;
		background: #9bdcdc;
		line-height: 20px;
	}

	/* Word window */
	.word {
		position: absolute;
		left: 585px;
		top: 6px;
		box-sizing: border-box;
		display: flex;
		flex-direction: column;
		width: 916px;
		height: 433px;
		padding: 0 4px;
		border: 1px solid #8fa2bf;
		border-radius: 7px 7px 5px 5px;
		background: linear-gradient(#dde4ec, #d0dbe9 28px, #bfdbff 28px, #bfdbff 54px, #b6cdeb 60px, #c5d8f2);
		overflow: hidden;
	}

	.word-title {
		display: flex;
		align-items: center;
		height: 28px;
	}

	.qat {
		display: flex;
		align-items: center;
		gap: 4px;
		width: 80px;
		height: 20px;
		margin-left: 40px;
		padding-left: 10px;
		border: 1px solid #b2bdcf;
		border-left: 0;
		border-radius: 0 11px 11px 0;
		background: #dbe4f0;
	}

	.redo {
		margin-left: 4px;
	}

	.save {
		margin-left: 4px;
	}

	.more {
		margin: 0 0 0 7px;
	}

	.screen .word h1 {
		width: 340px;
		padding-left: 18px;
		color: #8d949e;
		font-size: 13px;
		white-space: nowrap;
	}

	.context {
		box-sizing: border-box;
		align-self: stretch;
		width: 105px;
		margin-left: 12px;
		padding: 7px 0 0 7px;
		border-bottom: 1px solid #f0d23c;
		background: linear-gradient(rgb(255 240 120 / 0), rgb(255 232 80 / 0.6));
		color: #15428b;
	}

	.word-sys {
		display: flex;
		gap: 9px;
		margin: 0 3px 0 auto;
	}

	.tabs {
		display: flex;
		gap: 1px;
		height: 26px;
		padding-left: 44px;
		color: #15428b;
	}

	.screen .tabs button {
		padding: 1px 14px 0;
	}

	.screen .tabs .current {
		margin-left: 5px;
		padding: 0 12px;
		border: 1px solid #d8c880;
		border-bottom: 0;
		border-radius: 4px 4px 0 0;
		background: linear-gradient(#fffbe0, #fff2a8);
	}

	.screen .tabs .layout {
		margin-left: 1px;
	}

	.ask {
		margin: 6px 3px 0 auto;
	}

	.ribbon {
		display: flex;
		gap: 3px;
		height: 102px;
		padding: 2px 2px 2px 1px;
		border: 1px solid #d8d4b8;
		border-radius: 4px;
		background: linear-gradient(#fffce0, #fdfdf8 40%, #fff);
	}

	.group {
		display: flex;
		flex-direction: column;
		justify-content: space-between;
		border: 1px solid #c5d0df;
		border-radius: 3px;
		color: #15428b;
	}

	.screen .group h2 {
		height: 19px;
		background: #d3e1f2;
		color: #3e6aaa;
		line-height: 19px;
		text-align: center;
	}

	.g-options {
		width: 146px;
	}

	.g-styles {
		width: 448px;
	}

	.g-draw {
		width: 227px;
	}

	.group-main {
		display: flex;
	}

	.checks {
		display: grid;
		grid-template-columns: 64px 1fr;
		grid-auto-rows: 22px;
		padding: 1px 0 0 6px;
	}

	.checks label {
		display: flex;
		align-items: center;
		gap: 6px;
		white-space: nowrap;
	}

	.checks .off {
		color: #8d8d8d;
	}

	.checks input {
		appearance: none;
		box-sizing: border-box;
		width: 13px;
		height: 13px;
		border: 1px solid #9bb3d4;
		background: linear-gradient(135deg, #b4bdca, #fff);
		box-shadow: inset 0 0 0 2px #eef3fa;
	}

	.checks .off input {
		border-color: #bbb;
		background: #f6f6f6;
	}

	.gallery {
		display: flex;
		gap: 8px;
		box-sizing: border-box;
		width: 376px;
		height: 60px;
		margin: 4px 0 0 4px;
		padding: 5px 0 5px 4px;
		border: 1px solid #b9cfe8;
		background: #d5e5f7;
	}

	.screen .thumb {
		display: flex;
		align-items: center;
		justify-content: center;
		width: 64px;
		height: 48px;
		flex-shrink: 0;
		background: #fff;
	}

	.scroller {
		display: flex;
		flex-direction: column;
		width: 14px;
		margin: -5px 0 -5px -4px;
	}

	.screen .scroller button {
		flex: 1;
		display: flex;
		align-items: center;
		justify-content: center;
		border: 1px solid #b9cfe8;
		background: #e4eefb;
	}

	.fills {
		padding: 1px 0 0 7px;
	}

	.screen .fills button,
	.screen .pen {
		display: flex;
		align-items: center;
		gap: 4px;
		height: 22px;
	}

	.pens {
		width: 132px;
	}

	.screen .combo {
		display: flex;
		align-items: center;
		gap: 8px;
		box-sizing: border-box;
		width: 125px;
		height: 22px;
		margin-left: 3px;
		padding: 0 5px;
		border: 1px solid #b3c7e1;
		background: #eaf2fb;
		color: #000;
		font: 12px/18px 'Liberation Mono', 'Noto Sans CJK SC', monospace;
	}

	.screen .combo.first {
		width: 127px;
		padding-left: 12px;
	}

	.combo i {
		flex: 1;
		border-top: 1px solid #000;
		margin-right: 5px;
	}

	.screen .pen {
		margin-left: 5px;
	}

	.screen .big {
		display: flex;
		flex-direction: column;
		align-items: center;
		gap: 5px;
		min-width: 45px;
		padding-top: 6px;
	}

	.g-draw h2 svg {
		float: right;
		margin: 4px 4px 0 0;
	}

	.workspace {
		flex: 1;
		display: flex;
		min-height: 0;
		margin-top: 5px;
		padding-left: 48px;
		background: linear-gradient(#a9c4e8, #8fb0dc 45%, #5880b4 82%, #6a97d2);
		overflow: hidden;
	}

	.page {
		box-sizing: border-box;
		width: 796px;
		padding-left: 34px;
		border: 1px solid #000;
		border-width: 0 2px 0 1px;
		background: #fff;
		font: 16px/20px 'Liberation Mono', 'Noto Sans CJK SC', monospace;
		overflow: hidden;
	}

	.mark {
		margin-left: 1px;
		vertical-align: middle;
	}

	.line {
		display: flex;
		align-items: center;
		width: 733px;
		justify-content: space-between;
	}

	.ends {
		display: flex;
		flex-direction: column;
		gap: 14px;
	}

	table {
		border-collapse: collapse;
		table-layout: fixed;
		white-space: nowrap;
	}

	.board {
		width: 721px;
		margin-top: -18px;
		background: #ccffff;
		font-size: 13px;
	}

	.board td {
		height: 22px;
		padding: 0;
		border: 2px solid #66c299;
	}

	.board td:first-child {
		width: 112px;
		padding-left: 1px;
		font-size: 16px;
	}

	.board td:nth-child(2) {
		width: 341px;
	}

	.screen .page h2 {
		padding: 2px 0 2px 4px;
		color: #1010d0;
		font: bold 20px/24px 'Liberation Mono', monospace;
	}

	.impedance {
		width: 716px;
		margin-left: 5px;
		font-size: 11px;
		line-height: 16px;
	}

	.impedance :is(th, td) {
		height: 21px;
		padding: 0 0 0 1px;
		border: 1px solid #000;
		text-align: left;
		overflow: hidden;
	}

	.impedance th {
		height: 22px;
		background: #99ffcc;
		color: #0000d8;
		font: bold 13px/16px 'Liberation Serif', 'Noto Sans CJK SC', serif;
	}

	.impedance .pink {
		background: #ff99cc;
	}

	.reply {
		padding-top: 1px;
		width: 733px;
	}

	.reply p {
		display: grid;
		grid-template-columns: 246px 224px 1fr 9px;
		align-items: center;
		padding-left: 2px;
		height: 21px;
		white-space: nowrap;
	}

	.reply p > :global(svg) {
		grid-column: 4;
	}

	.screen .reply .note-line {
		color: #1010d0;
	}

	.reply .sign span:last-child {
		padding-left: 48px;
	}

	.vscroll {
		display: flex;
		flex-direction: column;
		align-items: center;
		width: 15px;
		margin-left: auto;
		background: #a6c4ec;
	}

	.track {
		flex: 1;
		display: flex;
		flex-direction: column;
		align-items: center;
		justify-content: space-between;
		width: 13px;
		padding: 5px 0;
		background: #7f9cc6;
	}

	.thumb-v {
		display: flex;
		flex-direction: column;
		justify-content: center;
		gap: 2px;
		width: 11px;
		height: 28px;
		margin-top: 22px;
		border: 1px solid #5a78a8;
		border-radius: 2px;
		background: linear-gradient(90deg, #fff, #c8d4e8);
	}

	.thumb-v i {
		margin: 0 2px;
		border-top: 1px solid #6a7890;
	}

	.word-status {
		display: flex;
		height: 21px;
		margin: 0 -4px;
		border-top: 1px solid #567db1;
		background: linear-gradient(#dbe9fb, #c2d8f4 40%, #b0cbef 45%, #cfe2fb);
		color: #15306b;
		line-height: 19px;
	}

	.word-status > span {
		padding: 0 9px 0 10px;
		border-right: 1px solid #8fb0dc;
		white-space: nowrap;
	}

	.views {
		display: flex;
		align-items: center;
		gap: 9px;
		box-sizing: border-box;
		width: 304px;
		margin-left: auto;
		padding-left: 4px;
		border-left: 2px solid #6f94c8;
		background: linear-gradient(#b3cdf0, #86a9db 50%, #7da3d8);
	}

	.view-set {
		display: flex;
		height: 19px;
		border: 1px solid #6f94c8;
		background: #b9d0f0;
	}

	.screen .view-set button {
		display: flex;
		align-items: center;
		justify-content: center;
		width: 18px;
	}

	.screen .view-set .on {
		background: #ffd98a;
	}

	.screen .round {
		display: flex;
		align-items: center;
		justify-content: center;
		box-sizing: border-box;
		width: 15px;
		height: 15px;
		flex-shrink: 0;
		border: 1px solid #456;
		border-radius: 50%;
		background: #f2f6fc;
	}

	#zoom {
		appearance: none;
		flex: 1;
		min-width: 0;
		height: 14px;
		margin: 0 -8px;
		background: linear-gradient(#456aa0, #456aa0) center / 100% 1px no-repeat;
	}

	#zoom::-webkit-slider-thumb {
		appearance: none;
		width: 9px;
		height: 12px;
		border: 1px solid #456;
		border-radius: 1px 1px 5px 5px;
		background: #e8f0fb;
	}

	.screen .office {
		position: absolute;
		left: 6px;
		top: 6px;
		display: flex;
		align-items: center;
		justify-content: center;
		width: 38px;
		height: 38px;
		border: 1px solid #8c98ac;
		border-radius: 50%;
		background: linear-gradient(#fff, #c8d0de 50%, #fff);
	}

	.badge {
		position: absolute;
		left: 1108px;
		top: -29px;
		box-sizing: border-box;
		width: 47px;
		height: 47px;
		padding-top: 27px;
		border: 2px solid #3f6f48;
		border-radius: 50%;
		background: #41bf62;
		box-shadow: inset 0 0 0 1px #c8f0d0;
		color: #fff;
		font: bold 11px/14px 'DejaVu Sans', sans-serif;
		text-align: center;
	}

	.comment {
		position: absolute;
		left: 1022px;
		top: 591px;
		box-sizing: border-box;
		width: 334px;
		height: 125px;
		padding: 4px 6px;
		background: #fff;
		box-shadow: 2px 2px 6px rgb(0 0 0 / 0.7);
		color: #d01414;
		font: 25px/29px 'Noto Sans CJK SC', sans-serif;
		white-space: nowrap;
	}

	.highlight {
		position: absolute;
		box-sizing: border-box;
		border: 4px solid #1be81b;
		box-shadow: 2px 2px 4px rgb(0 0 0 / 0.5), inset 2px 2px 4px rgb(0 0 0 / 0.5);
	}

	.highlight.value {
		left: 1032px;
		top: 263px;
		width: 78px;
		height: 57px;
	}

	.highlight.radius {
		left: 939px;
		top: 784px;
		width: 55px;
		height: 47px;
	}
</style>
